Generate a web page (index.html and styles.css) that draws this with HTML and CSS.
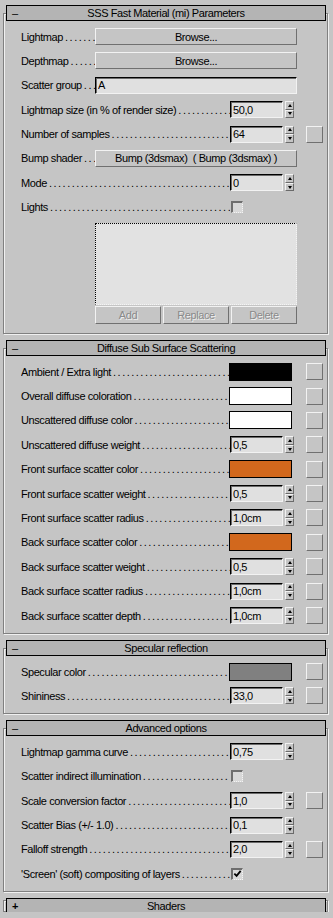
FILE: index.html
```html
<!DOCTYPE html>
<html>
<head>
    <title>SSS Fast Material (mi) Parameters</title>
    <link rel="stylesheet" href="styles.css">
</head>
<body>
<div class="panel">

    <div class="rollout">
        <div class="rollout-head"><span class="toggle">&ndash;</span><span class="title">SSS Fast Material (mi) Parameters</span></div>
        <div class="rollout-body">
            <div class="row"><span class="label short">Lightmap</span><button class="wide">Browse...</button></div>
            <div class="row"><span class="label short">Depthmap</span><button class="wide">Browse...</button></div>
            <div class="row"><span class="label short">Scatter group</span><input class="text" type="text" value="A"></div>
            <div class="row"><span class="label">Lightmap size (in % of render size)</span><input class="field" type="text" value="50,0"><span class="spin"><span class="up"></span><span class="down"></span></span></div>
            <div class="row"><span class="label">Number of samples</span><input class="field" type="text" value="64"><span class="spin"><span class="up"></span><span class="down"></span></span><button class="map"></button></div>
            <div class="row"><span class="label short">Bump shader</span><button class="wide">Bump (3dsmax)&nbsp; ( Bump (3dsmax) )</button></div>
            <div class="row"><span class="label">Mode</span><input class="field" type="text" value="0"><span class="spin"><span class="up"></span><span class="down"></span></span></div>
            <div class="row"><span class="label">Lights</span><span class="check"></span></div>
            <div class="listgroup">
                <div class="listbox"></div>
                <div class="listbtns">
                    <button class="dim">Add</button>
                    <button class="dim">Replace</button>
                    <button class="dim">Delete</button>
                </div>
            </div>
        </div>
    </div>

    <div class="rollout">
        <div class="rollout-head"><span class="toggle">&ndash;</span><span class="title">Diffuse Sub Surface Scattering</span></div>
        <div class="rollout-body">
            <div class="row"><span class="label cl">Ambient / Extra light</span><span class="swatch black"></span><button class="map"></button></div>
            <div class="row"><span class="label cl">Overall diffuse coloration</span><span class="swatch white"></span><button class="map"></button></div>
            <div class="row"><span class="label cl">Unscattered diffuse color</span><span class="swatch white"></span><button class="map"></button></div>
            <div class="row"><span class="label">Unscattered diffuse weight</span><input class="field" type="text" value="0,5"><span class="spin"><span class="up"></span><span class="down"></span></span><button class="map"></button></div>
            <div class="row"><span class="label cl">Front surface scatter color</span><span class="swatch orange"></span><button class="map"></button></div>
            <div class="row"><span class="label">Front surface scatter weight</span><input class="field" type="text" value="0,5"><span class="spin"><span class="up"></span><span class="down"></span></span><button class="map"></button></div>
            <div class="row"><span class="label">Front surface scatter radius</span><input class="field" type="text" value="1,0cm"><span class="spin"><span class="up"></span><span class="down"></span></span><button class="map"></button></div>
            <div class="row"><span class="label cl">Back surface scatter color</span><span class="swatch orange"></span><button class="map"></button></div>
            <div class="row"><span class="label">Back surface scatter weight</span><input class="field" type="text" value="0,5"><span class="spin"><span class="up"></span><span class="down"></span></span><button class="map"></button></div>
            <div class="row"><span class="label">Back surface scatter radius</span><input class="field" type="text" value="1,0cm"><span class="spin"><span class="up"></span><span class="down"></span></span><button class="map"></button></div>
            <div class="row"><span class="label">Back surface scatter depth</span><input class="field" type="text" value="1,0cm"><span class="spin"><span class="up"></span><span class="down"></span></span><button class="map"></button></div>
        </div>
    </div>

    <div class="rollout">
        <div class="rollout-head"><span class="toggle">&ndash;</span><span class="title">Specular reflection</span></div>
        <div class="rollout-body">
            <div class="row"><span class="label cl">Specular color</span><span class="swatch gray"></span><button class="map"></button></div>
            <div class="row"><span class="label">Shininess</span><input class="field" type="text" value="33,0"><span class="spin"><span class="up"></span><span class="down"></span></span><button class="map"></button></div>
        </div>
    </div>

    <div class="rollout">
        <div class="rollout-head"><span class="toggle">&ndash;</span><span class="title">Advanced options</span></div>
        <div class="rollout-body">
            <div class="row"><span class="label">Lightmap gamma curve</span><input class="field" type="text" value="0,75"><span class="spin"><span class="up"></span><span class="down"></span></span></div>
            <div class="row"><span class="label">Scatter indirect illumination</span><span class="check"></span></div>
            <div class="row"><span class="label">Scale conversion factor</span><input class="field" type="text" value="1,0"><span class="spin"><span class="up"></span><span class="down"></span></span><button class="map"></button></div>
            <div class="row"><span class="label">Scatter Bias (+/- 1.0)</span><input class="field" type="text" value="0,1"><span class="spin"><span class="up"></span><span class="down"></span></span></div>
            <div class="row"><span class="label">Falloff strength</span><input class="field" type="text" value="2,0"><span class="spin"><span class="up"></span><span class="down"></span></span><button class="map"></button></div>
            <div class="row"><span class="label">'Screen' (soft) compositing of layers</span><span class="check"><svg width="10" height="10" viewBox="0 0 10 10"><path d="M1.5 4.5 L4 7 L8.5 1.5" fill="none" stroke="#000" stroke-width="2"/></svg></span></div>
        </div>
    </div>

    <div class="rollout">
        <div class="rollout-head"><span class="toggle plus">+</span><span class="title">Shaders</span></div>
        <div class="rollout-body closed"></div>
    </div>

</div>
</body>
</html>
```

FILE: styles.css
```css
body {
    margin: 0;
    background-color: #c5c5c5;
    font-family: "Liberation Sans", Arial, sans-serif;
    font-size: 11px;
    letter-spacing: -0.4px;
    color: #000;
}

.panel {
    display: flex;
    flex-direction: column;
    gap: 6px;
    padding: 5px 5px 0 3px;
}

/* rollout header bar */
.rollout-head {
    position: relative;
    z-index: 1;
    height: 16px;
    box-sizing: border-box;
    margin: 0 2px 0 3px;
    border: 1px solid #000;
    background-color: #b4b4b4;
    display: grid;
    grid-template-columns: 1fr auto 1fr;
    align-items: center;
    line-height: 14px;
}

.toggle {
    padding-left: 5px;
}

.toggle.plus {
    font-weight: bold;
}

.title {
    white-space: nowrap;
}

/* etched frame under the header */
.rollout-body {
    margin-top: -8px;
    border: 1px solid #808080;
    box-shadow: inset 1px 1px 0 #f0f0f0, 1px 1px 0 #f0f0f0;
    padding: 14px 4px 9px 17px;
    display: flex;
    flex-direction: column;
    gap: 7.4px;
}

/* collapsed rollout: only the brackets beside the header show */
.rollout-body.closed {
    margin-top: -14px;
    height: 10px;
    padding: 0;
}

.row {
    display: flex;
    align-items: center;
    height: 17px;
}

.label {
    flex: none;
    width: 209px;
    overflow: hidden;
    white-space: nowrap;
}

.label::after {
    content: "........................................................................";
    letter-spacing: 1.5px;
    margin-left: 2px;
}

.label.short {
    width: 74px;
}

.label.cl {
    width: 208px;
}

button {
    font-family: inherit;
    font-size: 11px;
    letter-spacing: inherit;
    color: #000;
    padding: 0;
    margin: 0;
    background-color: #c5c5c5;
    border: 1px solid;
    border-color: #f2f2f2 #707070 #707070 #f2f2f2;
}

.wide {
    width: 202px;
    height: 17px;
}

.text,
.field {
    box-sizing: border-box;
    height: 17px;
    margin: 0;
    padding: 0 0 0 2px;
    font-family: inherit;
    font-size: 11px;
    letter-spacing: inherit;
    color: #000;
    background-color: #e0e0e0;
    border: 1px solid;
    border-color: #000 #f2f2f2 #f2f2f2 #000;
    box-shadow: inset 1px 1px 0 #6a6a6a;
    outline: none;
}

.text {
    width: 202px;
}

.field {
    width: 53px;
}

.spin {
    flex: none;
    width: 9px;
    height: 17px;
    margin-left: 2px;
    display: flex;
    flex-direction: column;
}

.spin span {
    flex: 1;
    box-sizing: border-box;
    border: 1px solid;
    border-color: #f2f2f2 #6a6a6a #6a6a6a #f2f2f2;
    display: flex;
    align-items: center;
    justify-content: center;
}

.spin .up::after,
.spin .down::after {
    content: "";
    border-left: 2.5px solid transparent;
    border-right: 2.5px solid transparent;
}

.spin .up::after {
    border-bottom: 3px solid #000;
}

.spin .down::after {
    border-top: 3px solid #000;
}

.map {
    flex: none;
    width: 17px;
    height: 17px;
    margin-left: auto;
}

.swatch {
    flex: none;
    width: 63px;
    height: 18px;
    box-sizing: border-box;
    border: 1px solid #000;
}

.black { background-color: #000; }
.white { background-color: #fff; }
.orange { background-color: #d2681d; }
.gray { background-color: #808080; }

.check {
    flex: none;
    width: 12px;
    height: 12px;
    box-sizing: border-box;
    margin-left: 1px;
    border-style: solid dotted dotted solid;
    border-width: 2px 1px 1px 2px;
    border-color: #6e6e6e #f4f4f4 #f4f4f4 #6e6e6e;
    background-color: #d8d8d8;
    display: flex;
    align-items: center;
    justify-content: center;
}

.listgroup {
    margin-left: 74px;
    width: 202px;
    display: flex;
    flex-direction: column;
    gap: 1px;
}

.listbox {
    height: 82px;
    box-sizing: border-box;
    background-color: #e2e2e2;
    border: 1px dotted;
    border-color: #000 #f4f4f4 #f4f4f4 #000;
}

.listbtns {
    display: flex;
    gap: 2px;
}

.dim {
    width: 66px;
    height: 18px;
    color: #8a8a8a;
    text-shadow: 1px 1px 0 #eeeeee;
}
```
